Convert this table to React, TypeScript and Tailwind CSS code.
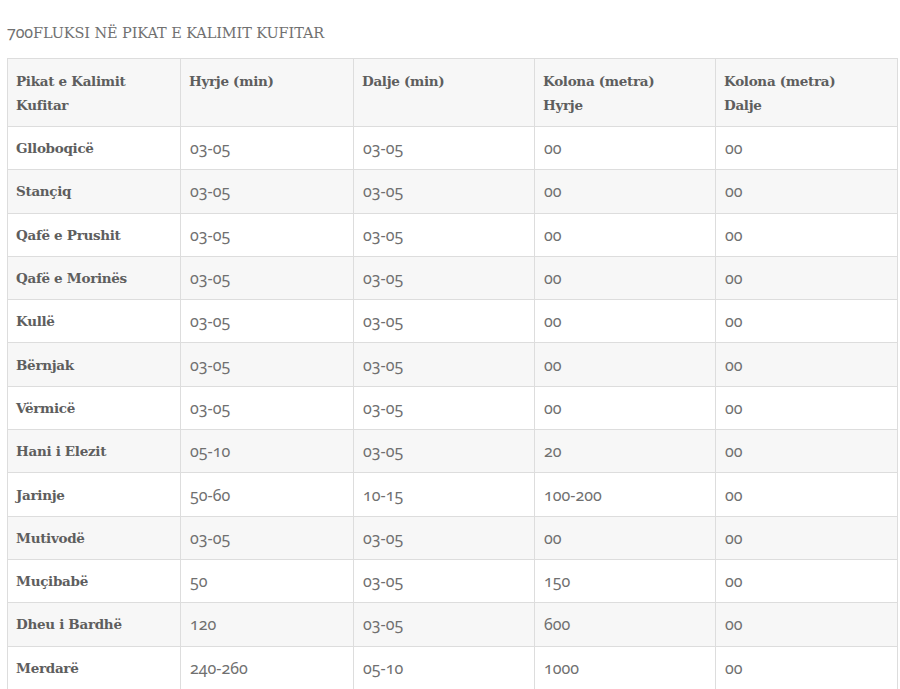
type Row = {
  name: string;
  inMin: string;
  outMin: string;
  inQueue: string;
  outQueue: string;
};

const rows: Row[] = [
  { name: "Glloboqicë", inMin: "03-05", outMin: "03-05", inQueue: "00", outQueue: "00" },
  { name: "Stançiq", inMin: "03-05", outMin: "03-05", inQueue: "00", outQueue: "00" },
  { name: "Qafë e Prushit", inMin: "03-05", outMin: "03-05", inQueue: "00", outQueue: "00" },
  { name: "Qafë e Morinës", inMin: "03-05", outMin: "03-05", inQueue: "00", outQueue: "00" },
  { name: "Kullë", inMin: "03-05", outMin: "03-05", inQueue: "00", outQueue: "00" },
  { name: "Bërnjak", inMin: "03-05", outMin: "03-05", inQueue: "00", outQueue: "00" },
  { name: "Vërmicë", inMin: "03-05", outMin: "03-05", inQueue: "00", outQueue: "00" },
  { name: "Hani i Elezit", inMin: "05-10", outMin: "03-05", inQueue: "20", outQueue: "00" },
  { name: "Jarinje", inMin: "50-60", outMin: "10-15", inQueue: "100-200", outQueue: "00" },
  { name: "Mutivodë", inMin: "03-05", outMin: "03-05", inQueue: "00", outQueue: "00" },
  { name: "Muçibabë", inMin: "50", outMin: "03-05", inQueue: "150", outQueue: "00" },
  { name: "Dheu i Bardhë", inMin: "120", outMin: "03-05", inQueue: "600", outQueue: "00" },
  { name: "Merdarë", inMin: "240-260", outMin: "05-10", inQueue: "1000", outQueue: "00" },
];

const slab = "font-['DejaVu_Serif','Liberation_Serif',serif]";
const sans = "font-['Noto_Sans','Open_Sans',sans-serif] oldstyle-nums";

export default function App() {
  return (
    <div className="h-[689px] overflow-hidden bg-white pl-[7px] pr-[3px] pt-[24px] text-[#666]">
      {/* Title */}
      <h2 className={`${slab} h-[18px] text-[14.5px] leading-[18px] tracking-[-0.1px] text-[#707070]`}>
        <span className={`${sans} text-[16px] leading-none`}>700</span>FLUKSI NË PIKAT E KALIMIT KUFITAR
      </h2>

      <table className="mt-[16px] w-[890px] table-fixed border-collapse border border-[#dddddd]">
        <colgroup>
          <col className="w-[173px]" />
          <col className="w-[173px]" />
          <col className="w-[181px]" />
          <col className="w-[181px]" />
          <col className="w-[182px]" />
        </colgroup>
        <thead>
          <tr className="bg-[#f7f7f7]">
            {["Pikat e Kalimit Kufitar", "Hyrje (min)", "Dalje (min)", "Kolona (metra) Hyrje", "Kolona (metra) Dalje"].map((h) => (
              <th
                key={h}
                className={`${slab} h-[68px] border border-[#dddddd] px-[8px] pt-[10px] pb-[9px] text-left align-top text-[13.5px] font-bold leading-[24px] tracking-[-0.3px] text-[#5e5e5e]`}
              >
                <span className="block w-[130px]">{h}</span>
              </th>
            ))}
          </tr>
        </thead>
        <tbody>
          {rows.map((r, i) => (
            <tr key={r.name} className={i % 2 === 1 ? "bg-[#f7f7f7]" : "bg-white"}>
              <td
                className={`${slab} h-[43.3px] border border-[#dddddd] px-[8px] py-0 align-middle text-[13.5px] font-bold leading-[24px] tracking-[-0.3px] text-[#5e5e5e]`}
              >
                {r.name}
              </td>
              {[r.inMin, r.outMin, r.inQueue, r.outQueue].map((v, j) => (
                <td
                  key={j}
                  className={`${sans} border border-[#dddddd] px-[9px] py-0 align-middle text-[16px] leading-[24px] text-[#707070]`}
                >
                  {v}
                </td>
              ))}
            </tr>
          ))}
        </tbody>
      </table>
    </div>
  );
}
